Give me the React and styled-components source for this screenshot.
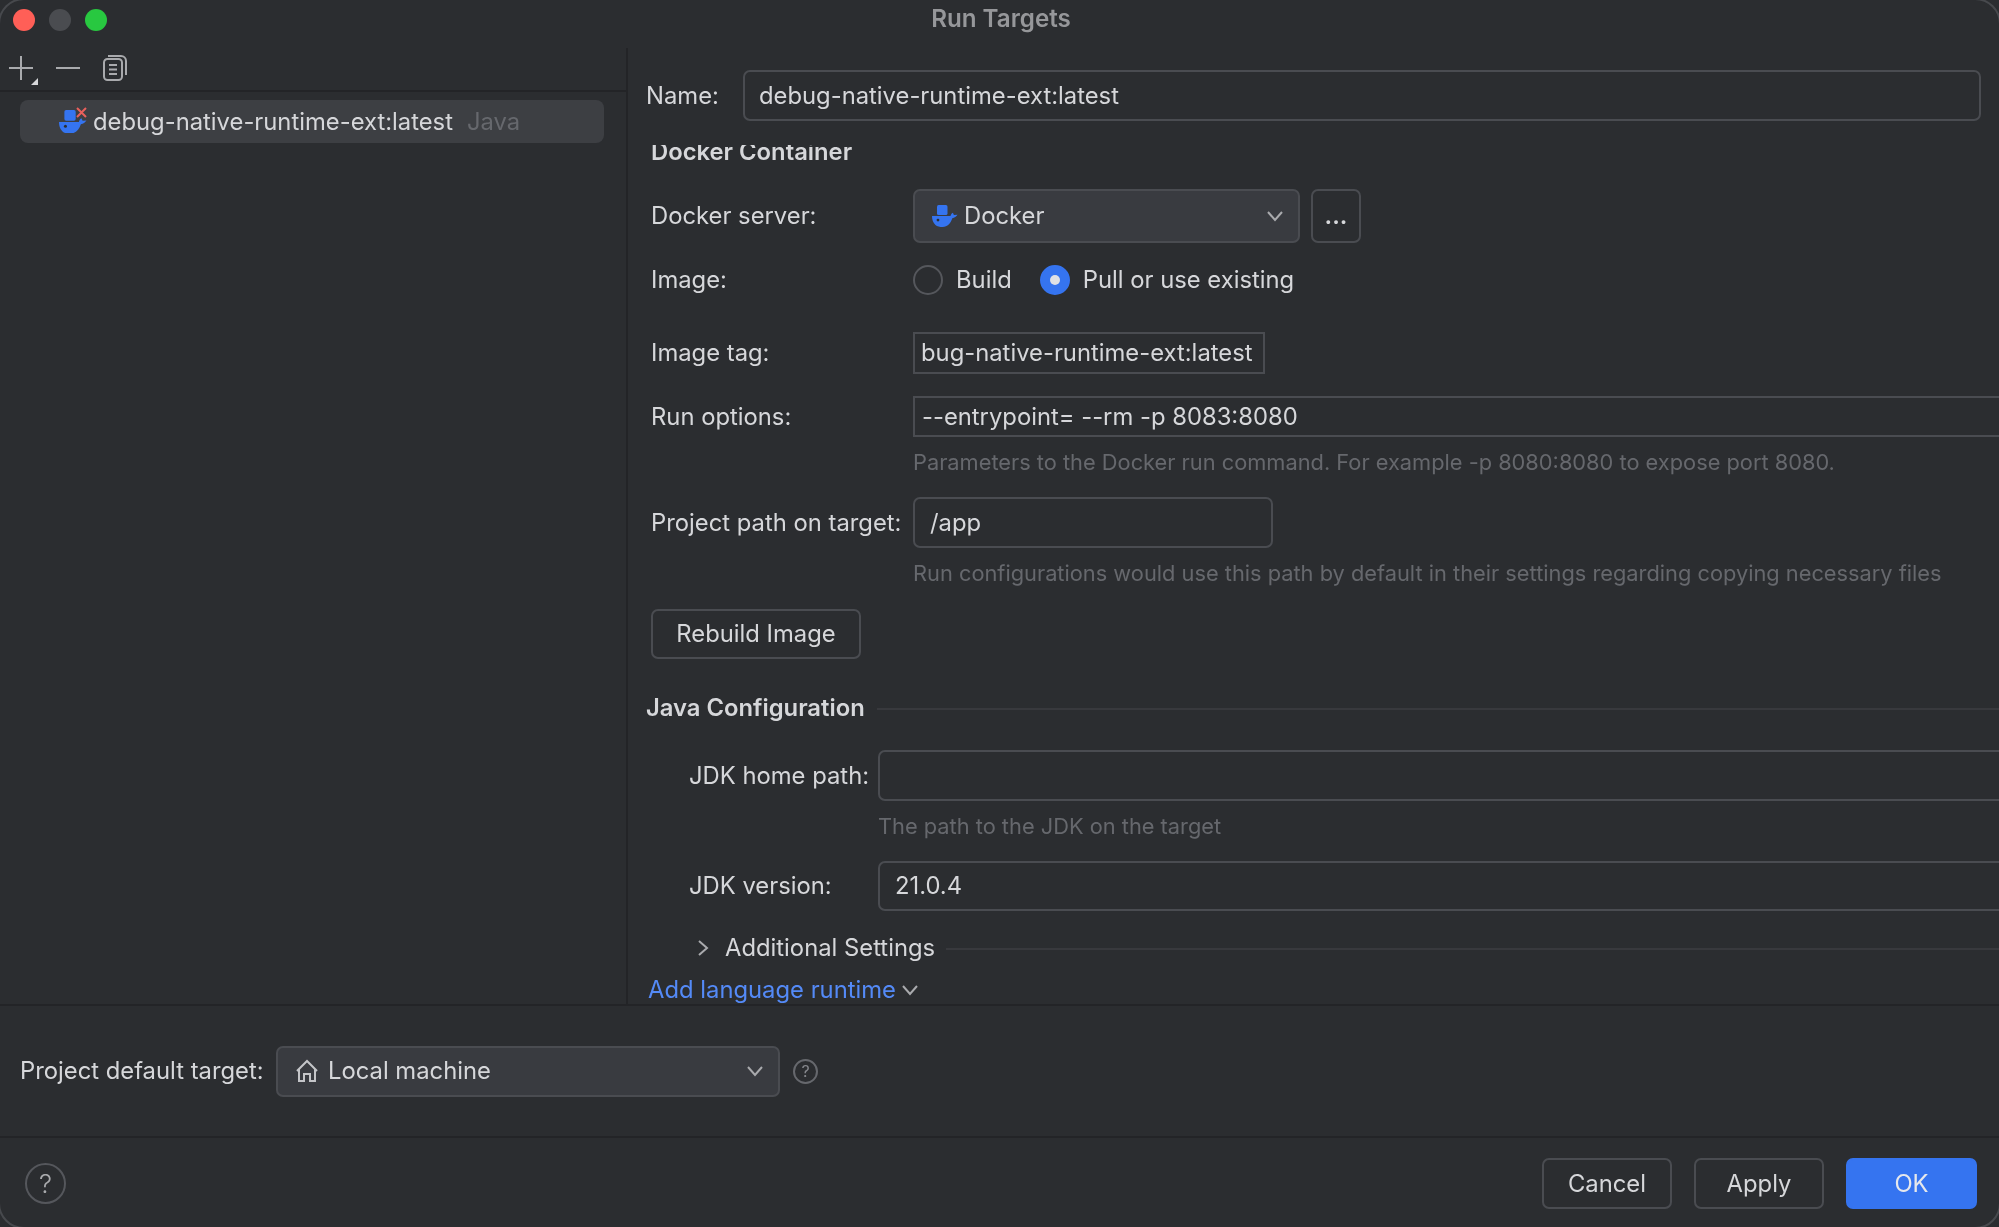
import styled, { createGlobalStyle } from "styled-components"

const GlobalStyle = createGlobalStyle`
    html, body {
        margin: 0;
        padding: 0;
        background: #2b2d30;
    }

    * {
        box-sizing: border-box;
    }
`

const Window = styled.div`
    position: relative;
    width: 1999px;
    height: 1227px;
    display: flex;
    flex-direction: column;
    overflow: hidden;
    background: #2b2d30;
    color: #d6d7da;
    font-family: "Inter", "Liberation Sans", sans-serif;
    font-size: 23.8px;
    line-height: 24px;
    filter: blur(0.4px);

    /* rounded window edge, only the corners fall inside the shot */
    &::after {
        content: "";
        position: absolute;
        inset: -2px;
        border: 2px solid #47494d;
        border-radius: 26px;
        pointer-events: none;
    }
`

const TitleBar = styled.div`
    height: 48px;
    flex: none;
    display: flex;
    padding: 9px 0 0 3px;
    position: relative;
    justify-content: center;
`

const Lights = styled.div`
    position: absolute;
    left: 13px;
    top: 9px;
    display: flex;
    gap: 14px;
`

const Light = styled.span`
    width: 22px;
    height: 22px;
    border-radius: 50%;
    background: ${p => p.$color};
`

const Title = styled.div`
    font-size: 24.2px;
    font-weight: 600;
    line-height: 20px;
    color: #96979a;
`

const Main = styled.div`
    height: 956px;
    flex: none;
    display: flex;
`

const Sidebar = styled.div`
    width: 628px;
    flex: none;
    border-right: 2px solid #232427;
`

const Toolbar = styled.div`
    height: 44px;
    border-bottom: 2px solid #232427;
    display: flex;
    align-items: flex-start;
    padding: 7px 0 0 9px;
    gap: 23px;
`

const ToolIcon = styled.svg`
    display: block;
    flex: none;
    fill: none;
    stroke: #a9aaad;
    stroke-width: 2;
    margin-left: ${p => p.$ml || 0}px;
`

const SelectedItem = styled.div`
    margin: 8px 22px 0 20px;
    height: 43px;
    border-radius: 8px;
    background: #3d3f43;
    display: flex;
    align-items: center;
    padding-left: 39px;
    gap: 6px;
`

const ItemHint = styled.span`
    color: #66686d;
    margin-left: 8px;
`

const DockerBox = styled.span`
    position: relative;
    display: block;
    flex: none;
    width: 28px;
    height: 24px;
`

const BadgeX = styled.svg`
    position: absolute;
    right: 0;
    top: -3px;
    stroke: #e9605c;
    stroke-width: 2;
    fill: none;
`

const Content = styled.div`
    flex: 1;
    min-width: 0;
    display: flex;
    flex-direction: column;
    padding-left: 18px;
`

const NameRow = styled.div`
    flex: none;
    display: flex;
    align-items: center;
    margin-top: 22px;
`

const NameLabel = styled.span`
    width: 97px;
    flex: none;
`

const NameInput = styled.div`
    width: 1238px;
    height: 51px;
    border: 2px solid #4a4c51;
    border-radius: 7px;
    display: flex;
    align-items: center;
    padding-left: 14px;
`

const ScrollPane = styled.div`
    flex: 1;
    min-height: 0;
    margin-top: 24px;
    overflow: hidden;
`

const Form = styled.div`
    margin-top: -5px;
    padding-left: 5px;
    width: 1400px;
`

const Heading = styled.div`
    font-weight: 600;
    height: 24px;
    display: flex;
    align-items: center;
    gap: 12px;
    margin-top: ${p => p.$mt || 0}px;
    margin-left: ${p => p.$ml || 0}px;
`

const HeadingLine = styled.span`
    flex: 1;
    height: 2px;
    margin-top: 2px;
    background: #38393d;
`

const Row = styled.div`
    display: flex;
    align-items: center;
    margin-top: ${p => p.$mt || 0}px;
`

const Label = styled.div`
    width: ${p => p.$w || 262}px;
    flex: none;
`

const Combo = styled.div`
    width: ${p => p.$w}px;
    height: ${p => p.$h}px;
    flex: none;
    border: 2px solid #4a4c51;
    border-radius: 7px;
    background: #393b40;
    display: flex;
    align-items: center;
    padding: 0 15px 0 17px;
    gap: ${p => p.$gap}px;
`

const ComboText = styled.span`
    flex: 1;
`

const DotsButton = styled.div`
    width: 50px;
    height: 54px;
    margin-left: 11px;
    border: 2px solid #4a4c51;
    border-radius: 7px;
    display: flex;
    justify-content: center;
    align-items: center;
    font-weight: 600;
`

const Radio = styled.span`
    width: 30px;
    height: 30px;
    border-radius: 50%;
    flex: none;
    border: 2px solid ${p => (p.$on ? "#3574f0" : "#55575c")};
    background: ${p => (p.$on ? "#3574f0" : "transparent")};
    display: flex;
    align-items: center;
    justify-content: center;
    margin-right: 13px;

    &::after {
        content: "";
        display: ${p => (p.$on ? "block" : "none")};
        width: 10px;
        height: 10px;
        border-radius: 50%;
        background: #dfe1e5;
    }
`

const RadioText = styled.span`
    margin-right: 28px;
`

const TextField = styled.div`
    width: ${p => p.$w}px;
    height: ${p => p.$h}px;
    flex: none;
    border: 2px solid #4a4c51;
    border-radius: ${p => p.$radius || 0}px;
    display: flex;
    align-items: center;
    padding-left: ${p => p.$pl}px;
`

const Hint = styled.div`
    color: #66686d;
    font-size: 21.8px;
    white-space: nowrap;
    margin-top: ${p => p.$mt}px;
    margin-left: ${p => p.$ml}px;
`

const OutlineButton = styled.div`
    width: ${p => p.$w}px;
    height: ${p => p.$h}px;
    flex: none;
    border: 2px solid ${p => (p.$primary ? "#3574f0" : "#4a4c51")};
    background: ${p => (p.$primary ? "#3574f0" : "transparent")};
    color: ${p => (p.$primary ? "#e6e8ec" : "inherit")};
    border-radius: 7px;
    display: flex;
    align-items: center;
    justify-content: center;
    margin-top: ${p => p.$mt || 0}px;
`

const JavaGroup = styled.div`
    padding-left: 38px;
`

const Additional = styled.div`
    height: 24px;
    display: flex;
    align-items: center;
    margin: 25px 0 0 44px;
`

const AdditionalText = styled.span`
    margin-left: 14px;
    margin-right: 11px;
`

const AddLink = styled.div`
    height: 24px;
    display: flex;
    align-items: center;
    gap: 6px;
    margin: 18px 0 0 -3px;
    color: #548af7;
`

const TargetBar = styled.div`
    flex: none;
    height: 134px;
    border-top: 2px solid #232427;
    border-bottom: 2px solid #232427;
    display: flex;
    align-items: center;
    padding-left: 20px;
`

const TargetLabel = styled.div`
    width: 256px;
    flex: none;
`

const SmallHelp = styled.div`
    width: 25px;
    height: 25px;
    margin-left: 13px;
    border: 2px solid #66686d;
    border-radius: 50%;
    color: #86888d;
    font-size: 16px;
    display: flex;
    align-items: center;
    justify-content: center;
`

const BottomBar = styled.div`
    flex: 1;
    display: flex;
    align-items: flex-start;
    justify-content: space-between;
    padding: 20px 22px 0 25px;
`

const BigHelp = styled.div`
    width: 41px;
    height: 41px;
    margin-top: 5px;
    border: 2px solid #55575c;
    border-radius: 50%;
    color: #a9aaad;
    font-size: 26px;
    font-weight: 300;
    display: flex;
    align-items: center;
    justify-content: center;
`

const Buttons = styled.div`
    display: flex;
    gap: 22px;
`

const Chevron = ({ dir = "down", color = "#a9aaad", size = 16 }) => (
    <svg width={size} height={size} viewBox="0 0 16 16" fill="none" stroke={color} strokeWidth="2" style={{ flex: "none" }}>
        {dir === "down" ? <path d="M1 4l7 8 7-8" /> : <path d="M4 1l8 7-8 7" />}
    </svg>
)

const Whale = ({ width = 26 }) => (
    <svg width={width} height={width * 0.85} viewBox="0 0 26 22" style={{ display: "block", flex: "none" }}>
        <rect x="5" y="0" width="10.5" height="10" rx="1.6" fill="#3574f0" />
        <path d="M0 11h18.5c.3-1.6 1.2-2.8 2.4-3.4l1 2.4 3.6-.2c-1.2 1.9-3 3-5.2 3.3C18.6 18.6 15 22 9.6 22 3.6 22 0 17.6 0 11z" fill="#3574f0" />
        <circle cx="6" cy="15" r="1.4" fill="#2b2d30" />
    </svg>
)

export default function App() {
    return (
        <Window>
            <GlobalStyle />
            <TitleBar>
                <Lights>
                    <Light $color="#ff5f57" />
                    <Light $color="#4a4c50" />
                    <Light $color="#28c840" />
                </Lights>
                <Title>Run Targets</Title>
            </TitleBar>
            <Main>
                <Sidebar>
                    <Toolbar>
                        <ToolIcon width="30" height="30" viewBox="0 0 30 30">
                            <path d="M12 1v24M0 13h24" />
                            <path d="M29 23v7h-7z" fill="#d6d7da" stroke="none" />
                        </ToolIcon>
                        <ToolIcon width="24" height="26" viewBox="0 0 24 26" $ml={-6}>
                            <path d="M0 13h24" />
                        </ToolIcon>
                        <ToolIcon width="24" height="26" viewBox="0 0 24 26">
                            <rect x="1" y="4" width="18" height="21" rx="3.5" />
                            <path d="M5 1h13a5 5 0 0 1 5 5v14" />
                            <path d="M6 10h8M6 14.5h8M6 19h8" />
                        </ToolIcon>
                    </Toolbar>
                    <SelectedItem>
                        <DockerBox>
                            <Whale width={28} />
                            <BadgeX width="11" height="11" viewBox="0 0 11 11">
                                <path d="M1 1l9 9M10 1l-9 9" />
                            </BadgeX>
                        </DockerBox>
                        <span>debug-native-runtime-ext:latest</span>
                        <ItemHint>Java</ItemHint>
                    </SelectedItem>
                </Sidebar>
                <Content>
                    <NameRow>
                        <NameLabel>Name:</NameLabel>
                        <NameInput>debug-native-runtime-ext:latest</NameInput>
                    </NameRow>
                    <ScrollPane>
                        <Form>
                            <Heading>Docker Container</Heading>
                            <Row $mt={25}>
                                <Label>Docker server:</Label>
                                <Combo $w={387} $h={54} $gap={6}>
                                    <Whale width={26} />
                                    <ComboText>Docker</ComboText>
                                    <Chevron />
                                </Combo>
                                <DotsButton>...</DotsButton>
                            </Row>
                            <Row $mt={22}>
                                <Label>Image:</Label>
                                <Radio />
                                <RadioText>Build</RadioText>
                                <Radio $on />
                                <span>Pull or use existing</span>
                            </Row>
                            <Row $mt={37}>
                                <Label>Image tag:</Label>
                                <TextField $w={352} $h={42} $pl={6}>bug-native-runtime-ext:latest</TextField>
                            </Row>
                            <Row $mt={22}>
                                <Label>Run options:</Label>
                                <TextField $w={1100} $h={41} $pl={7}>--entrypoint= --rm -p 8083:8080</TextField>
                            </Row>
                            <Hint $mt={13} $ml={262}>Parameters to the Docker run command. For example -p 8080:8080 to expose port 8080.</Hint>
                            <Row $mt={23}>
                                <Label>Project path on target:</Label>
                                <TextField $w={360} $h={51} $radius={7} $pl={15}>/app</TextField>
                            </Row>
                            <Hint $mt={13} $ml={262}>Run configurations would use this path by default in their settings regarding copying necessary files</Hint>
                            <OutlineButton $w={210} $h={50} $mt={24}>Rebuild Image</OutlineButton>
                            <Heading $mt={37} $ml={-5}>
                                <span>Java Configuration</span>
                                <HeadingLine />
                            </Heading>
                            <JavaGroup>
                                <Row $mt={30}>
                                    <Label $w={189}>JDK home path:</Label>
                                    <TextField $w={1200} $h={51} $radius={7} />
                                </Row>
                                <Hint $mt={13} $ml={189}>The path to the JDK on the target</Hint>
                                <Row $mt={23}>
                                    <Label $w={189}>JDK version:</Label>
                                    <TextField $w={1200} $h={50} $radius={7} $pl={15}>21.0.4</TextField>
                                </Row>
                            </JavaGroup>
                            <Additional>
                                <Chevron dir="right" />
                                <AdditionalText>Additional Settings</AdditionalText>
                                <HeadingLine />
                            </Additional>
                            <AddLink>
                                <span>Add language runtime</span>
                                <Chevron />
                            </AddLink>
                        </Form>
                    </ScrollPane>
                </Content>
            </Main>
            <TargetBar>
                <TargetLabel>Project default target:</TargetLabel>
                <Combo $w={504} $h={51} $gap={9}>
                    <svg width="24" height="24" viewBox="0 0 24 24" fill="none" stroke="#c4c5c8" strokeWidth="2" style={{ flex: "none" }}>
                        <path d="M2 12L12 2l10 10M4 10v12h5v-7h6v7h5V10" />
                    </svg>
                    <ComboText>Local machine</ComboText>
                    <Chevron />
                </Combo>
                <SmallHelp>?</SmallHelp>
            </TargetBar>
            <BottomBar>
                <BigHelp>?</BigHelp>
                <Buttons>
                    <OutlineButton $w={130} $h={51}>Cancel</OutlineButton>
                    <OutlineButton $w={130} $h={51}>Apply</OutlineButton>
                    <OutlineButton $w={131} $h={51} $primary>OK</OutlineButton>
                </Buttons>
            </BottomBar>
        </Window>
    )
}
